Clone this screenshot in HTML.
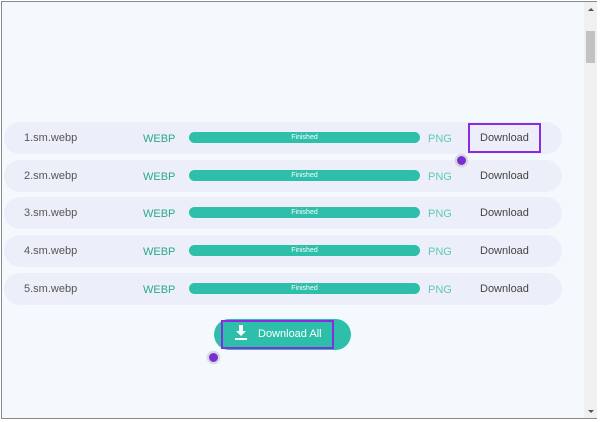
<!DOCTYPE html><html><head><style>
body{margin:0;width:600px;height:422px;overflow:hidden;background:#fff;font-family:"Liberation Sans",sans-serif}
.frame{position:absolute;left:1px;top:1px;width:596px;height:418px;border:1px solid #8a8a8a;background:#f3f9fd;box-sizing:border-box}
.sb{position:absolute;left:584px;top:2px;width:13px;height:416px;background:#f0f0f0}
.thumb{position:absolute;left:586px;top:31px;width:9px;height:32px;background:#c2c2c2}
.row{position:absolute;left:4px;width:558px;height:32px;border-radius:16px;background:#eceff9}
.name{position:absolute;left:20px;top:10px;font-size:11px;color:#555}
.fmt{position:absolute;left:139px;top:11px;font-size:11px;color:#2aa890}
.bar{position:absolute;left:185px;top:10px;width:231px;height:11px;border-radius:6px;background:#2dbfa9;color:#fff;font-size:7px;text-align:center;line-height:11px}
.png{position:absolute;left:424px;top:11px;font-size:11px;color:#5fc8b8}
.dl{position:absolute;left:476px;top:10px;font-size:11px;color:#444}
.badge{position:absolute;width:9px;height:9px;border-radius:50%;background:#7a2cd6;border:1px solid #ddd;box-shadow:0 0 2px #888}
</style></head><body>
<div class="frame"></div>
<div class="sb"></div><div class="thumb"></div>
<div style="position:absolute;left:588px;top:8px;border:3px solid transparent;border-bottom:3px solid #555;border-top:0"></div>
<div style="position:absolute;left:588px;top:410px;border:3px solid transparent;border-top:3px solid #555;border-bottom:0"></div>
<div class="row" style="top:122px"><span class="name">1.sm.webp</span><span class="fmt">WEBP</span><div class="bar">Finished</div><span class="png">PNG</span><span class="dl">Download</span></div>
<div class="row" style="top:160px"><span class="name">2.sm.webp</span><span class="fmt">WEBP</span><div class="bar">Finished</div><span class="png">PNG</span><span class="dl">Download</span></div>
<div class="row" style="top:197px"><span class="name">3.sm.webp</span><span class="fmt">WEBP</span><div class="bar">Finished</div><span class="png">PNG</span><span class="dl">Download</span></div>
<div class="row" style="top:235px"><span class="name">4.sm.webp</span><span class="fmt">WEBP</span><div class="bar">Finished</div><span class="png">PNG</span><span class="dl">Download</span></div>
<div class="row" style="top:273px"><span class="name">5.sm.webp</span><span class="fmt">WEBP</span><div class="bar">Finished</div><span class="png">PNG</span><span class="dl">Download</span></div>
<div style="position:absolute;left:468px;top:123px;width:73px;height:30px;border:2px solid #8a2be2;box-sizing:border-box"></div>
<div class="badge" style="left:456px;top:155px"></div>
<div style="position:absolute;left:214px;top:319px;width:137px;height:31px;border-radius:16px;background:#2dbfa9"></div>
<div style="position:absolute;left:221px;top:320px;width:113px;height:29px;border:2px solid #8a2be2;box-sizing:border-box"></div>
<svg style="position:absolute;left:234px;top:325px" width="14" height="16" viewBox="0 0 14 16"><path d="M5 0h4v6h3l-5 5-5-5h3z M1 13h12v2H1z" fill="#fff"/></svg>
<div style="position:absolute;left:258px;top:328px;font-size:11px;color:#fff">Download All</div>
<div class="badge" style="left:208px;top:352px"></div>
</body></html>
